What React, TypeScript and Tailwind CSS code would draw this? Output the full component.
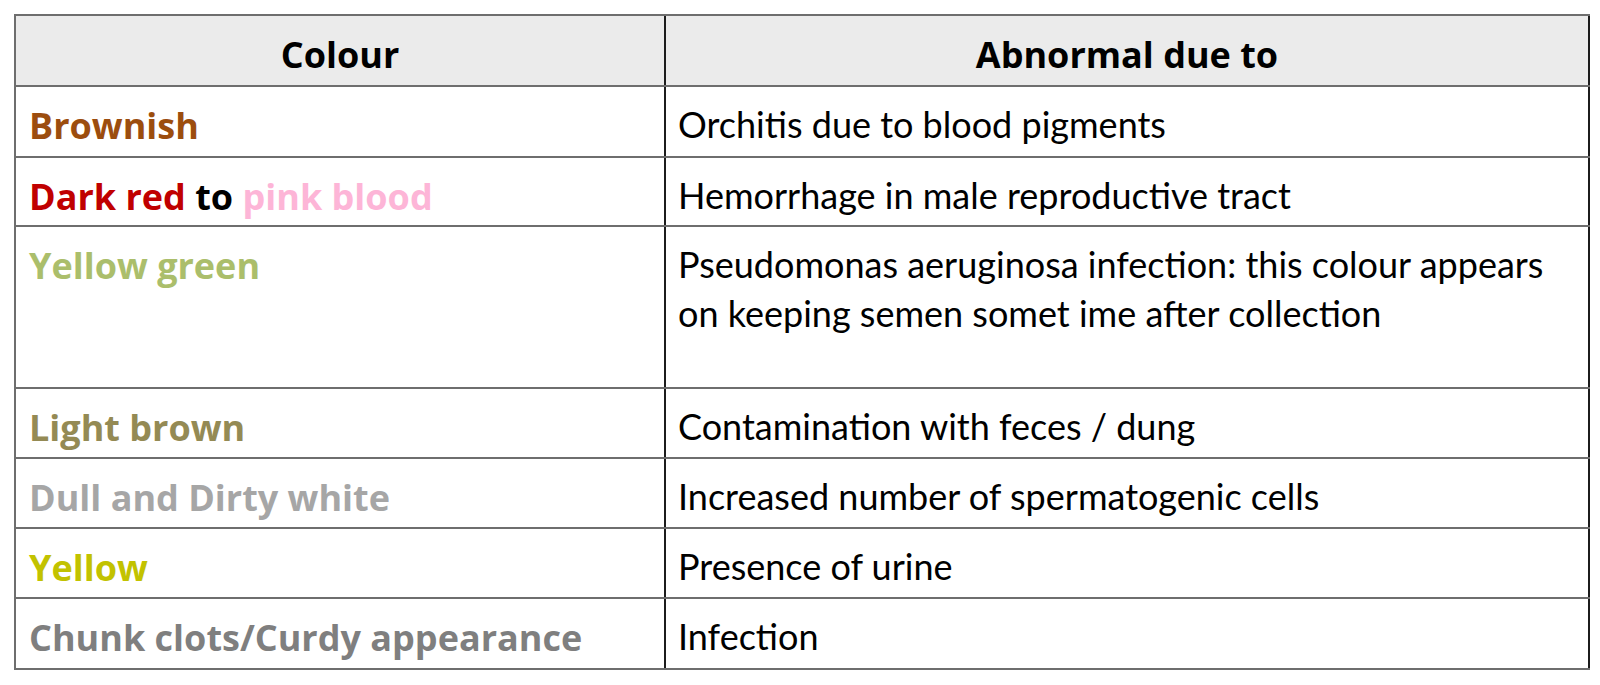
type Part = { text: string; color: string };

interface Row {
  colour: Part[];
  cause: string[];
  height: string;
}

const rows: Row[] = [
  { colour: [{ text: "Brownish", color: "text-[#9c4d0e]" }], cause: ["Orchitis due to blood pigments"], height: "h-[71px]" },
  {
    colour: [
      { text: "Dark red", color: "text-[#c00000]" },
      { text: " to ", color: "text-black" },
      { text: "pink blood", color: "text-[#fdb5d7]" },
    ],
    cause: ["Hemorrhage in male reproductive tract"],
    height: "h-[69px]",
  },
  {
    colour: [{ text: "Yellow green", color: "text-[#abbe6b]" }],
    cause: ["Pseudomonas aeruginosa infection: this colour appears", "on keeping semen somet ime after collection"],
    height: "h-[162px]",
  },
  { colour: [{ text: "Light brown", color: "text-[#948a54]" }], cause: ["Contamination with feces / dung"], height: "h-[70px]" },
  { colour: [{ text: "Dull and Dirty white", color: "text-[#a6a6a6]" }], cause: ["Increased number of spermatogenic cells"], height: "h-[70px]" },
  { colour: [{ text: "Yellow", color: "text-[#c2c200]" }], cause: ["Presence of urine"], height: "h-[70px]" },
  { colour: [{ text: "Chunk clots/Curdy appearance", color: "text-[#7f7f7f]" }], cause: ["Infection"], height: "h-[71px]" },
];

const bold = "font-['Open_Sans',sans-serif] font-bold text-[36px] leading-[49px]";
const regular = "font-['Lato',sans-serif] text-[36px] leading-[49px] text-black";

export default function App() {
  return (
    <div className="min-h-[685px] w-[1600px] bg-white pl-[14px] pt-[14px]">
      <div className="w-[1576px] border-l-2 border-t-2 border-[#6e6e6e]">
        <div className="grid h-[71px] grid-cols-[650px_924px] border-b-2 border-[#6e6e6e] bg-[#ebebeb]">
          <div className={`flex items-center justify-center border-r-2 border-[#1c1c1c] pt-[8px] text-black ${bold}`}>
            Colour
          </div>
          <div className={`flex items-center justify-center border-r-2 border-[#1c1c1c] pt-[8px] text-black ${bold}`}>
            Abnormal due to
          </div>
        </div>
        {rows.map((row, i) => (
          <div key={i} className={`grid grid-cols-[650px_924px] border-b-2 border-[#6e6e6e] ${row.height}`}>
            <div className={`border-r-2 border-[#1c1c1c] px-[13px] pt-[14px] ${bold}`}>
              {row.colour.map((p, j) => (
                <span key={j} className={`whitespace-pre ${p.color}`}>
                  {p.text}
                </span>
              ))}
            </div>
            <div className={`border-r-2 border-[#1c1c1c] pl-[12px] pt-[13px] ${regular}`}>
              {row.cause.map((line, j) => (
                <div key={j} className="whitespace-nowrap">
                  {line}
                </div>
              ))}
            </div>
          </div>
        ))}
      </div>
    </div>
  );
}
